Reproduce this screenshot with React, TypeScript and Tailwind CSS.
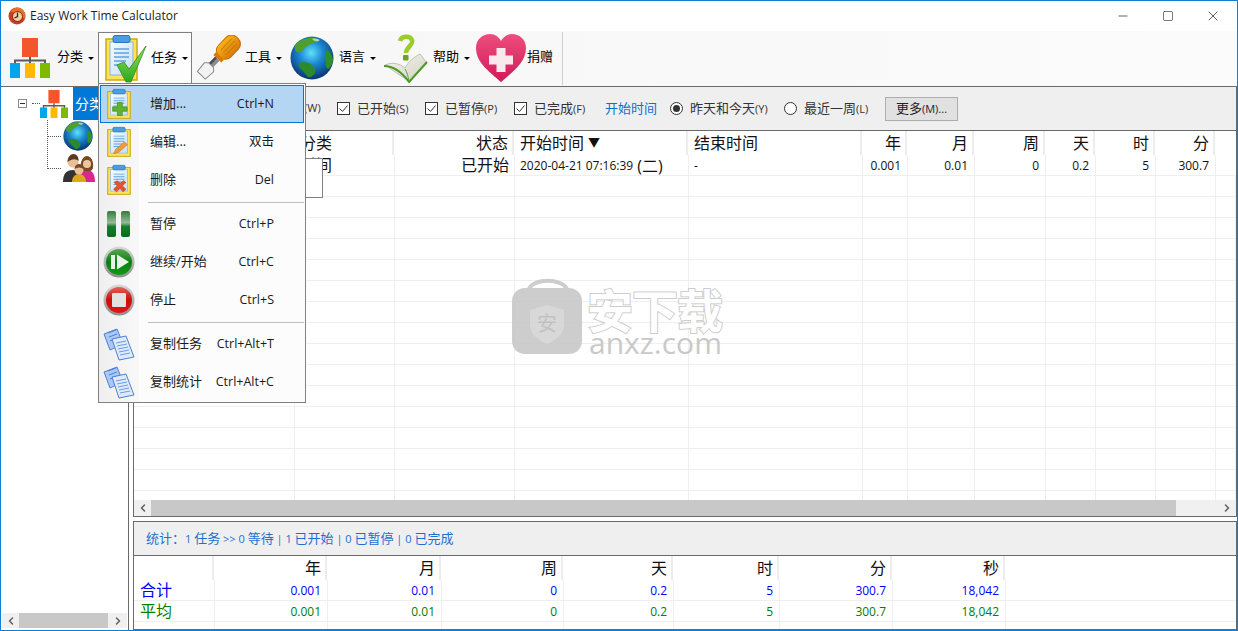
import { Minus, Square, X, ChevronLeft, ChevronRight } from "lucide-react";
import type { ReactNode } from "react";

function AppIcon() {
    return (
        <svg width="18" height="18" viewBox="0 0 18 18">
            <circle cx="9" cy="9" r="8.500" fill="#cf3a22" />
            <path d="M9 .5a8.500 8.500 0 0 1 8 11L3 4.500A8.500 8.500 0 0 1 9 .5z" fill="#e8702c" />
            <circle cx="9.500" cy="9.500" r="5" fill="#f3cf9f" stroke="#7a2a16" />
            <path d="M9.500 5.500v4l-3 1.500" fill="none" stroke="#3a2a1a" strokeWidth="1.300" />
        </svg>
    );
}

function OrgIcon({ width, height }: { width: number; height: number }) {
    return (
        <svg width={width} height={height} viewBox="0 0 40 40">
            <rect x="12" y="0" width="16" height="19" fill="#f4562b" />
            <path d="M20 19v4M5 27v-4.500h30V27M20 23v4" fill="none" stroke="#5b5b5b" strokeWidth="2" />
            <rect x="0" y="25" width="10" height="15" fill="#00a4ef" />
            <rect x="15" y="25" width="10" height="15" fill="#ffb900" />
            <rect x="30" y="25" width="10" height="15" fill="#7fba00" />
        </svg>
    );
}

function Clipboard({ width, height, badge }: { width: number; height: number; badge: "check" | "plus" | "pencil" | "cross" }) {
    return (
        <svg width={width} height={height} viewBox="0 0 33 46" preserveAspectRatio="none" className="overflow-visible">
            <defs>
                <linearGradient id="paperFill" x1="0" y1="0" x2="1" y2="1">
                    <stop offset="0" stopColor="#f6fbff" />
                    <stop offset="1" stopColor="#c4def7" />
                </linearGradient>
                <linearGradient id="checkFill" x1="0" y1="0" x2="0" y2="1">
                    <stop offset="0" stopColor="#9be05a" />
                    <stop offset="1" stopColor="#28a81e" />
                </linearGradient>
            </defs>
            <rect x="1" y="4" width="31" height="41" fill="#fbe35c" stroke="#c9a916" strokeWidth="1.500" />
            <rect x="5" y="7" width="23" height="33" fill="url(#paperFill)" stroke="#8fb4d8" />
            <rect x="8" y="0.500" width="17" height="7" rx="2" fill="#4d9be0" stroke="#2d74bd" />
            <path d="M9 14h15M9 18h15M9 22h15M9 26h12M9 30h8" stroke="#5fa2e0" strokeWidth="1.500" />
            {badge === "check" && (
                <path d="M12 30l7-3 5 7L41 11 26 47h-5z" fill="url(#checkFill)" stroke="#2d8f1a" strokeWidth="0.800" />
            )}
            {badge === "plus" && (
                <path d="M13 25h7v7h7v7h-7v7h-7v-7H6v-7h7z" transform="translate(2 -3) scale(.95)" fill="#5fb32e" stroke="#3b8a1c" />
            )}
            {badge === "pencil" && (
                <path d="M9 41l3-7 12-11 4 4-12 12z" fill="#ef9a3d" stroke="#c8701a" strokeWidth="0.800" />
            )}
            {badge === "cross" && (
                <path d="M10 27l4-3 4 4 5-4 3 3-5 5 5 5-4 4-4-5-5 5-4-4 5-5z" fill="#e8502f" stroke="#b5341a" strokeWidth="0.800" />
            )}
        </svg>
    );
}

function Screwdriver() {
    return (
        <svg width="46" height="46" viewBox="0 0 46 46">
            <defs>
                <linearGradient id="handleFill" x1="0" y1="0" x2="1" y2="0">
                    <stop offset="0" stopColor="#f9b21a" />
                    <stop offset="1" stopColor="#d97a06" />
                </linearGradient>
            </defs>
            <g transform="rotate(44 23 23)">
                <rect x="14.500" y="-5" width="17" height="26" rx="7.500" fill="url(#handleFill)" stroke="#c66f05" />
                <path d="M19.500 0v15M23 -1v16M26.500 0v15" stroke="#c77a0a" strokeWidth="1" />
                <rect x="17.500" y="20" width="11" height="4" fill="#d97a06" />
                <rect x="20" y="24" width="6" height="10" fill="#8c8c8c" />
                <path d="M20 24h2.500v10H20z" fill="#4d4d4d" />
                <path d="M19.500 33h7l3 3-1 11h-11l-1-11z" fill="#f2f2f2" stroke="#8a8a8a" />
            </g>
        </svg>
    );
}

function Globe({ size }: { size: number }) {
    return (
        <svg width={size} height={size} viewBox="0 0 44 44">
            <defs>
                <radialGradient id="globeFill" cx="0.48" cy="0.38" r="0.62">
                    <stop offset="0" stopColor="#5fe0f8" />
                    <stop offset="0.45" stopColor="#1c86d2" />
                    <stop offset="1" stopColor="#07356e" />
                </radialGradient>
            </defs>
            <circle cx="22" cy="22" r="21.500" fill="url(#globeFill)" />
            <path d="M5 9c5-5 12-8 19-7 5 1 3 4-1 5-4 2-7 3-9 6-2 3-5 4-7 3-2-1-3-4-2-7z" fill="#4fa02a" />
            <path d="M37 14c3 1 6 6 6 11-1 4-3 7-5 8-2-1-3-4-2-7 0-3-2-4-1-7 0-2 1-4 2-5z" fill="#2f8f2a" />
            <path d="M9 27c4-2 9-1 13 2 3 2 4 5 3 8-2 3-5 5-7 4-3-3-4-6-7-8-2-2-3-4-2-6z" fill="#2c8a2c" />
            <path d="M22 3c3-1 6 0 8 1-2 2-5 2-8-1z" fill="#b7d89a" />
        </svg>
    );
}

function Book() {
    return (
        <svg width="44" height="49" viewBox="0 0 44 49">
            <defs>
                <linearGradient id="pageFill" x1="0" y1="0" x2="1" y2="1">
                    <stop offset="0" stopColor="#f8f8f0" />
                    <stop offset="1" stopColor="#cfcfc2" />
                </linearGradient>
            </defs>
            <path d="M1 31c7-3 14-2 20 3 3-6 9-11 15-14l7 9c-5 5-12 11-17 19z" fill="url(#pageFill)" stroke="#a9a9a0" strokeWidth="0.700" />
            <path d="M14 21c4 1 7 4 9 9l6-9-8-2z" fill="#f4f4ea" />
            <path d="M0 32c9 0 17 5 25 16l18-20" fill="none" stroke="#4c9a24" strokeWidth="2" />
            <path d="M21 35c2 3 3 7 4 12" fill="none" stroke="#5aa72c" strokeWidth="1" />
            <path d="M16 7c1-5 10-6 12-1 2 5-6 7-6 13" fill="none" stroke="#9ccb2c" strokeWidth="4.500" />
            <rect x="19" y="21" width="5.500" height="5.500" rx="1" fill="#6aa51f" />
        </svg>
    );
}

function Heart() {
    return (
        <svg width="50" height="48" viewBox="0 0 50 48" className="ml-[2px] shrink-0">
            <defs>
                <linearGradient id="heartFill" x1="0" y1="0" x2="0" y2="1">
                    <stop offset="0" stopColor="#ef4d7d" />
                    <stop offset="1" stopColor="#cf1a58" />
                </linearGradient>
            </defs>
            <path d="M25 48C14 38 0 29 0 14 0 5 7 0 14 0c5 0 9 3 11 7 2-4 6-7 11-7 7 0 14 5 14 14 0 15-14 24-25 34z" fill="url(#heartFill)" />
            <path d="M20.500 14h9v7.500H37v9h-7.500V38h-9v-7.500H13v-9h7.500z" fill="#f9e9ee" />
        </svg>
    );
}

function PauseIcon() {
    return (
        <svg width="26" height="26" viewBox="0 0 26 26">
            <defs>
                <linearGradient id="pauseFill" x1="0" y1="0" x2="0" y2="1">
                    <stop offset="0" stopColor="#2f7d3a" />
                    <stop offset="0.45" stopColor="#9ab89a" />
                    <stop offset="0.6" stopColor="#14802a" />
                    <stop offset="1" stopColor="#0a6a1c" />
                </linearGradient>
            </defs>
            <rect x="1" y="0" width="9" height="26" rx="2" fill="url(#pauseFill)" />
            <rect x="15" y="0" width="9" height="26" rx="2" fill="url(#pauseFill)" />
        </svg>
    );
}

function RoundIcon({ kind }: { kind: "play" | "stop" }) {
    const play = kind === "play";
    return (
        <svg width="32" height="32" viewBox="0 0 32 32">
            <defs>
                <linearGradient id="ringFill" x1="0" y1="0" x2="0" y2="1">
                    <stop offset="0" stopColor="#d8d8d8" />
                    <stop offset="1" stopColor="#8d8d8d" />
                </linearGradient>
                <linearGradient id="playFill" x1="0" y1="0" x2="0" y2="1">
                    <stop offset="0" stopColor="#56a84f" />
                    <stop offset="0.5" stopColor="#0c7d12" />
                    <stop offset="1" stopColor="#0f9a16" />
                </linearGradient>
                <linearGradient id="stopFill" x1="0" y1="0" x2="0" y2="1">
                    <stop offset="0" stopColor="#e5605a" />
                    <stop offset="0.5" stopColor="#c80f0c" />
                    <stop offset="1" stopColor="#e51510" />
                </linearGradient>
            </defs>
            <circle cx="16" cy="16" r="15.500" fill="url(#ringFill)" />
            <circle cx="16" cy="16" r="13" fill={play ? "url(#playFill)" : "url(#stopFill)"} />
            {play ? (
                <g fill="#e8f3e8">
                    <rect x="8" y="9" width="4" height="14" />
                    <path d="M14 8.500L26 16 14 23.500z" />
                </g>
            ) : (
                <rect x="9" y="9" width="14" height="14" rx="1" fill="#e2e2e2" />
            )}
        </svg>
    );
}

function CopyIcon() {
    return (
        <svg width="33" height="33" viewBox="0 0 33 33">
            <g stroke="#4f7fd0" strokeWidth="1">
                <path d="M1 6l13-5 6 15-13 6z" fill="#a9c8f5" />
                <path d="M5 5l8-3M6 9l8-3M7 13l8-3" stroke="#4f7fd0" />
                <path d="M9 11l14-3 8 21-15 3z" fill="#dceafc" />
            </g>
            <path d="M13 15l10-2M14 18l10-2M15 21l10-2M16 24l10-2M17 27l10-2" stroke="#6f9be0" strokeWidth="1" />
        </svg>
    );
}

function People() {
    return (
        <svg width="32" height="28" viewBox="0 0 32 28">
            <path d="M0 28c0-8 3-12 10-12s9 4 9 12z" fill="#333" />
            <circle cx="10" cy="8" r="5.500" fill="#e8c09a" />
            <path d="M4.500 8c0-5 3-8 6-8s5.500 3 5 7c-2-2-6-3-11 1z" fill="#5b3a20" />
            <path d="M15 28c0-7 3-12 9-12s8 5 8 12z" fill="#d9278f" />
            <path d="M18 14c-1-7 2-12 6-12s7 5 6 12c-1 3-3 3-3 3h-7s-2-1-2-3z" fill="#7a4a26" />
            <circle cx="24" cy="10" r="4" fill="#ecc6a2" />
            <path d="M9 28c0-5 3-8 7-8s7 3 7 8z" fill="#e0a817" />
            <circle cx="16" cy="16" r="4.500" fill="#e8c09a" />
            <path d="M11.500 15c0-3 2-5 4.500-5s4.500 2 4.500 5c-3-2-6-2-9 0z" fill="#7a4a26" />
        </svg>
    );
}

function Arrow() {
    return <span className="ml-[5px] h-0 w-0 border-x-[3px] border-t-[3px] border-x-transparent border-t-black" />;
}

function ToolButton({ icon, label, arrow = true, open = false }: { icon: ReactNode; label: string; arrow?: boolean; open?: boolean }) {
    return (
        <div
            className={
                open
                    ? "flex h-[52px] w-[94px] items-center border border-b-0 border-[#808080] bg-[#fdfdfd] text-[13px] text-black"
                    : "flex h-[52px] w-[94px] items-center border border-transparent text-[13px] text-black"
            }
        >
            <span className="mr-[2px] flex w-[50px] shrink-0 items-center justify-center">{icon}</span>
            <span className="-mt-[2px]">{label}</span>
            {arrow && <Arrow />}
        </div>
    );
}

function CheckBox({ label, hotkey, className }: { label: string; hotkey: string; className: string }) {
    return (
        <span className={`flex items-center gap-[7px] ${className}`}>
            <svg width="13" height="13" viewBox="0 0 13 13">
                <rect x="0.500" y="0.500" width="12" height="12" fill="#fff" stroke="#333" />
                <path d="M2.500 6.500l3 3 5-6" fill="none" stroke="#333" strokeWidth="1" />
            </svg>
            <span>{label}<span className="text-[11px]">({hotkey})</span></span>
        </span>
    );
}

function Radio({ label, hotkey, className, checked = false }: { label: string; hotkey: string; className: string; checked?: boolean }) {
    return (
        <span className={`flex items-center gap-[7px] ${className}`}>
            <svg width="13" height="13" viewBox="0 0 13 13">
                <circle cx="6.500" cy="6.500" r="6" fill="#fff" stroke="#333" />
                {checked && <circle cx="6.500" cy="6.500" r="3.500" fill="#333" />}
            </svg>
            <span>{label}<span className="text-[11px]">({hotkey})</span></span>
        </span>
    );
}

function MenuItem({ icon, label, keys, active = false }: { icon: ReactNode; label: string; keys: string; active?: boolean }) {
    return (
        <div
            className={
                active
                    ? "mx-px flex h-[38px] items-center border border-[#0078d7] bg-[#b5d6f3] text-[#1a1a1a]"
                    : "mx-px flex h-[38px] items-center border border-transparent text-[#1a1a1a]"
            }
        >
            <span className="flex w-[36px] shrink-0 items-center justify-center">{icon}</span>
            <span className="ml-[13px] flex-1 text-[13px]">{label}</span>
            <span className="mr-[29px] text-[12.5px]">{keys}</span>
        </div>
    );
}

function MenuSeparator() {
    return (
        <div className="flex h-[6px] items-center pl-[49px] pr-px">
            <div className="h-px w-full bg-[#c0c0c0]" />
        </div>
    );
}

function ScrollArrows({ side }: { side: "left" | "right" }) {
    return side === "left" ? (
        <ChevronLeft size={12} strokeWidth={3} className="text-[#606060]" />
    ) : (
        <ChevronRight size={12} strokeWidth={3} className="text-[#606060]" />
    );
}

function StatNumber({ children }: { children: ReactNode }) {
    return <span className="text-[11px]">{children}</span>;
}

const mainHeaderCols = "grid-cols-[160px_100px_120px_174px_174px_45px_67px_71px_50px_60px_60px_1fr]";
const mainRowCols = "grid-cols-[161px_100px_120px_174px_174px_45px_67px_71px_50px_60px_60px_1fr]";
const statHeaderCols = "grid-cols-[80px_113px_114px_122px_110px_106px_113px_113px_1fr]";
const statRowCols = "grid-cols-[81px_113px_114px_122px_110px_106px_113px_113px_1fr]";

function Watermark() {
    return (
        <div className="absolute left-[511px] top-[274px] flex opacity-90">
            <svg width="72" height="80" viewBox="0 0 72 80">
                <path d="M17 14C21 3 50 3 55 14" fill="none" stroke="#c8c8c8" strokeWidth="4" />
                <rect x="0" y="13" width="70" height="66" rx="13" fill="#c8c8c8" />
                <path d="M35 30l17 5v15c0 9-8 15-17 19-9-4-17-10-17-19V35z" fill="#d4d4d4" />
                <text x="35" y="56" textAnchor="middle" fontSize="20" fill="#bcbcbc">安</text>
            </svg>
            <div className="ml-[3px] mt-[15px] flex w-[140px] flex-col">
                <span className="h-[40px] whitespace-nowrap text-[46px] font-bold leading-[40px] tracking-[-1px] text-white [-webkit-text-stroke:2px_#c8c8c8] [paint-order:stroke]">安下载</span>
                <span className="ml-[2px] h-[26px] font-['Open_Sans',sans-serif] text-[30px] leading-[26px] text-[#c4c4c4]">anxz.com</span>
            </div>
        </div>
    );
}

export default function App() {
    const emptyRows = Array.from({ length: 16 }, (_, i) => i);
    const emptyCells = Array.from({ length: 12 }, (_, i) => i);
    const numberCell = "flex items-center justify-end overflow-hidden border-r border-b border-[#efefef] pr-[6px] pt-[2px] text-xs leading-none";
    const wideNumberCell = "flex items-center justify-end overflow-hidden border-r border-b border-[#efefef] pr-[5px] text-base leading-none";
    const textCell = "flex items-center overflow-hidden whitespace-nowrap border-r border-b border-[#efefef] pl-[5px] leading-none";
    const headCell = "flex items-center justify-end border-r-2 border-[#ececec] pr-[4px] text-base";
    const headTextCell = "flex items-center border-r-2 border-[#ececec] pl-[6px] text-base";

    return (
        <div className="relative flex h-[631px] w-[1238px] flex-col overflow-hidden border border-[#0f7fd6] bg-white font-['Open_Sans','Noto_Sans_CJK_SC',sans-serif] text-[#111]">
            {/* title bar */}
            <div className="flex h-[30px] shrink-0 items-center pl-[7px]">
                <AppIcon />
                <span className="ml-[4px] text-xs text-[#222]">Easy Work Time Calculator</span>
                <div className="ml-auto flex items-center text-[#222]">
                    <span className="flex w-[45px] justify-center"><Minus size={14} strokeWidth={1.2} /></span>
                    <span className="flex w-[45px] justify-center"><Square size={12} strokeWidth={1.2} /></span>
                    <span className="mr-px flex w-[46px] justify-center"><X size={16} strokeWidth={1.1} /></span>
                </div>
            </div>

            {/* toolbar */}
            <div className="flex h-[55px] shrink-0 bg-gradient-to-r from-[#f6f6f6] to-[#fbfbfb] pl-[3px] pt-px">
                <ToolButton icon={<OrgIcon width={40} height={40} />} label="分类" />
                <ToolButton open icon={<span className="-ml-[5px] -mt-[2px] flex"><Clipboard width={33} height={46} badge="check" /></span>} label="任务" />
                <ToolButton icon={<Screwdriver />} label="工具" />
                <ToolButton icon={<Globe size={44} />} label="语言" />
                <ToolButton icon={<Book />} label="帮助" />
                <ToolButton arrow={false} icon={<Heart />} label="捐赠" />
                <div className="-ml-[7px] h-[53px] w-[2px] border-r border-[#d0d0d0]" />
            </div>

            <div className="flex min-h-0 flex-1">
                {/* tree panel */}
                <div className="relative flex w-[128px] shrink-0 flex-col border-r border-t border-[#6a6a6a]">
                    <div className="absolute left-[46px] top-[33px] h-[49px] w-px border-l border-dotted border-[#555]" />
                    <div className="absolute left-[46px] top-[49px] w-[14px] border-t border-dotted border-[#555]" />
                    <div className="absolute left-[46px] top-[81px] w-[14px] border-t border-dotted border-[#555]" />
                    <div className="flex h-[33px] items-center">
                        <span className="ml-[17px] flex h-[9px] w-[9px] items-center justify-center border border-[#8a8a8a]">
                            <span className="h-px w-[5px] bg-[#333]" />
                        </span>
                        <span className="ml-[5px] w-[8px] border-t border-dotted border-[#555]" />
                        <span className="flex w-[28px]"><OrgIcon width={28} height={28} /></span>
                        <span className="ml-[5px] flex h-[33px] flex-1 items-center bg-[#0078d7] pl-[2px] text-sm text-white">分类</span>
                    </div>
                    <div className="flex h-[32px] items-center pl-[62px]"><Globe size={30} /></div>
                    <div className="flex h-[32px] items-center pl-[62px]"><People /></div>
                    <div className="mx-px mb-[2px] mt-auto flex h-[15px] items-center justify-between bg-[#f0f0f0] px-[3px]">
                        <ScrollArrows side="left" />
                        <span className="ml-[2px] mr-auto h-full w-[89px] bg-[#c8c8c8]" />
                        <ScrollArrows side="right" />
                    </div>
                </div>

                {/* right side */}
                <div className="ml-[4px] flex min-w-0 flex-1 flex-col">
                    <div className="flex h-[431px] shrink-0 flex-col border border-[#6a6a6a]">
                        <div className="flex h-[44px] shrink-0 items-center border-b border-[#6a6a6a] bg-[#efefef] pl-[170px] text-[13px] text-[#333]">
                            <span className="w-[33px] text-[11px]">(W)</span>
                            <CheckBox className="w-[88px]" label="已开始" hotkey="S" />
                            <CheckBox className="w-[89px]" label="已暂停" hotkey="P" />
                            <CheckBox className="w-[91px]" label="已完成" hotkey="F" />
                            <span className="w-[65px] text-[#0d6fd1]">开始时间</span>
                            <Radio className="w-[114px]" checked label="昨天和今天" hotkey="Y" />
                            <Radio className="w-[101px]" label="最近一周" hotkey="L" />
                            <button className="h-[24px] w-[73px] border border-[#adadad] bg-[#e1e1e1] text-[13px] text-[#222]">更多<span className="text-[11px]">(M)...</span></button>
                        </div>

                        <div className={`grid h-[24px] shrink-0 ${mainHeaderCols}`}>
                            <span className="border-r-2 border-[#ececec]" />
                            <span className={headTextCell}>分类</span>
                            <span className={headCell}>状态</span>
                            <span className={headTextCell}>开始时间<span className="ml-[4px] text-xs">▼</span></span>
                            <span className={headTextCell}>结束时间</span>
                            <span className={headCell}>年</span>
                            <span className={headCell}>月</span>
                            <span className={headCell}>周</span>
                            <span className={headCell}>天</span>
                            <span className={headCell}>时</span>
                            <span className={headCell}>分</span>
                            <span />
                        </div>

                        <div className="min-h-0 flex-1 overflow-hidden">
                            <div className={`grid h-[21px] grid-rows-[21px] ${mainRowCols}`}>
                                <span className="border-r border-b border-[#efefef]" />
                                <span className={`${textCell} text-base`}>时间</span>
                                <span className={wideNumberCell}>已开始</span>
                                <span className={`${textCell} pt-[2px] text-xs`}>2020-04-21 07:16:39<span className="ml-[4px] text-base">(二)</span></span>
                                <span className={`${textCell} pt-[2px] text-xs`}>-</span>
                                <span className={numberCell}>0.001</span>
                                <span className={numberCell}>0.01</span>
                                <span className={numberCell}>0</span>
                                <span className={numberCell}>0.2</span>
                                <span className={numberCell}>5</span>
                                <span className={numberCell}>300.7</span>
                                <span className="border-b border-[#efefef]" />
                            </div>
                            {emptyRows.map((row) => (
                                <div key={row} className={`grid h-[21px] grid-rows-[21px] ${mainRowCols}`}>
                                    {emptyCells.map((cell) => (
                                        <span key={cell} className="border-r border-b border-[#efefef]" />
                                    ))}
                                </div>
                            ))}
                        </div>

                        <div className="flex h-[16px] shrink-0 items-center bg-[#f0f0f0] pl-[3px] pr-[3px]">
                            <ScrollArrows side="left" />
                            <span className="ml-[2px] h-full w-[1025px] bg-[#c8c8c8]" />
                            <span className="ml-auto flex"><ScrollArrows side="right" /></span>
                        </div>
                    </div>

                    <div className="mt-[4px] flex min-h-0 flex-1 flex-col border border-[#6a6a6a]">
                        <div className="flex h-[34px] shrink-0 items-center whitespace-pre border-b border-[#6a6a6a] bg-[#efefef] pl-[12px] text-[13px] text-[#1e6fd0]">
                            <span>统计：<StatNumber>1 </StatNumber>任务<StatNumber> &gt;&gt; 0 </StatNumber>等待<StatNumber> | 1 </StatNumber>已开始<StatNumber> | 0 </StatNumber>已暂停<StatNumber> | 0 </StatNumber>已完成</span>
                        </div>
                        <div className={`grid h-[24px] shrink-0 ${statHeaderCols}`}>
                            <span className="border-r-2 border-[#ececec]" />
                            {["年", "月", "周", "天", "时", "分", "秒"].map((unit) => (
                                <span key={unit} className={headCell}>{unit}</span>
                            ))}
                        </div>
                        <div className={`grid h-[21px] shrink-0 grid-rows-[21px] text-[#0000ff] ${statRowCols}`}>
                            <span className={`${textCell} pl-[6px] text-base`}>合计</span>
                            {["0.001", "0.01", "0", "0.2", "5", "300.7", "18,042"].map((value) => (
                                <span key={value} className={numberCell}>{value}</span>
                            ))}
                            <span className="border-b border-[#efefef]" />
                        </div>
                        <div className={`grid h-[21px] shrink-0 grid-rows-[21px] text-[#008000] ${statRowCols}`}>
                            <span className={`${textCell} pl-[6px] text-base`}>平均</span>
                            {["0.001", "0.01", "0", "0.2", "5", "300.7", "18,042"].map((value) => (
                                <span key={value} className={numberCell}>{value}</span>
                            ))}
                            <span className="border-b border-[#efefef]" />
                        </div>
                        <div className={`grid min-h-0 flex-1 ${statRowCols}`}>
                            {emptyCells.slice(0, 8).map((cell) => (
                                <span key={cell} className="border-r border-[#efefef]" />
                            ))}
                        </div>
                    </div>
                </div>
            </div>

            <Watermark />

            {/* tooltip left behind the menu */}
            <div className="absolute left-[290px] top-[157px] flex h-[40px] w-[32px] items-end justify-end border border-[#808080] bg-white pb-[3px] pr-[13px] text-[8px] leading-none">。</div>

            {/* open task menu */}
            <div className="absolute left-[97px] top-[82px] w-[208px] border border-[#808080] bg-[linear-gradient(to_right,#efefef_0,#f8f8f8_40px,#fcfcfc_40px)] py-px">
                <MenuItem active icon={<Clipboard width={24} height={30} badge="plus" />} label="增加..." keys="Ctrl+N" />
                <MenuItem icon={<Clipboard width={24} height={30} badge="pencil" />} label="编辑..." keys="双击" />
                <MenuItem icon={<Clipboard width={24} height={30} badge="cross" />} label="删除" keys="Del" />
                <MenuSeparator />
                <MenuItem icon={<PauseIcon />} label="暂停" keys="Ctrl+P" />
                <MenuItem icon={<RoundIcon kind="play" />} label="继续/开始" keys="Ctrl+C" />
                <MenuItem icon={<RoundIcon kind="stop" />} label="停止" keys="Ctrl+S" />
                <MenuSeparator />
                <MenuItem icon={<CopyIcon />} label="复制任务" keys="Ctrl+Alt+T" />
                <MenuItem icon={<CopyIcon />} label="复制统计" keys="Ctrl+Alt+C" />
            </div>
        </div>
    );
}
